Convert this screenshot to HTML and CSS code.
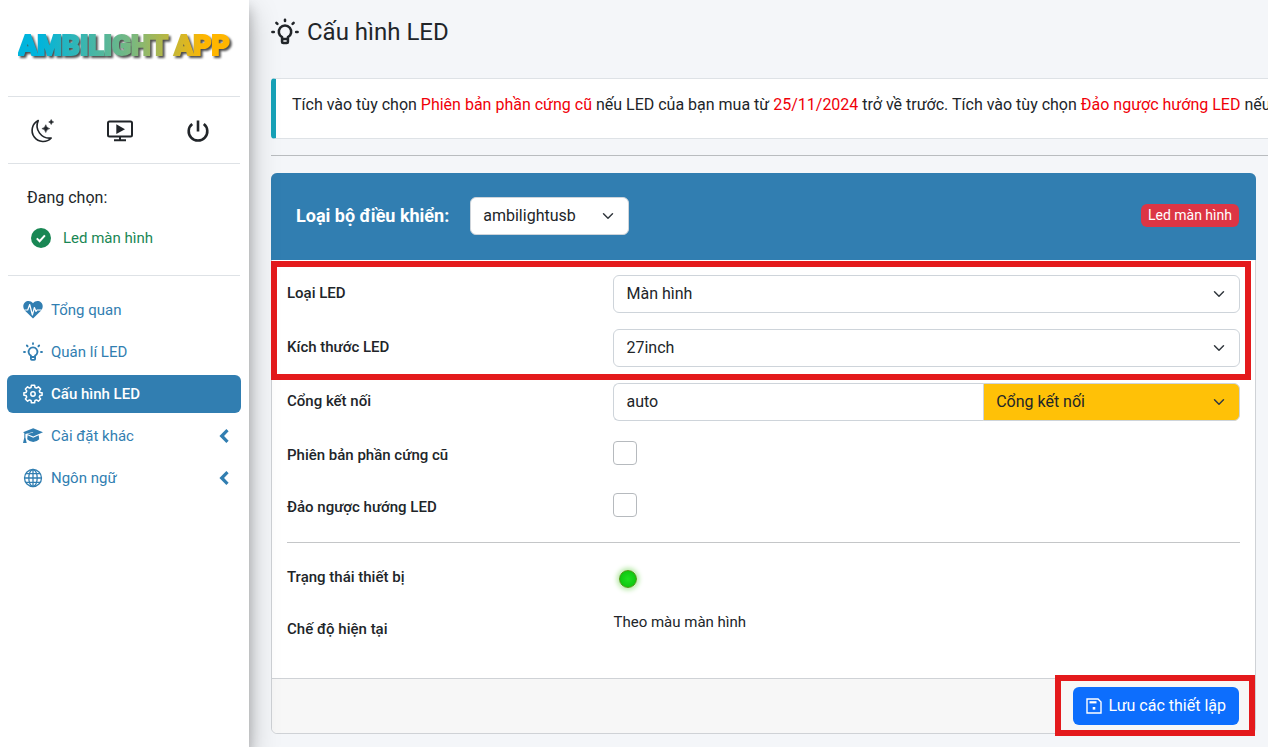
FILE: index.html
```html
<!DOCTYPE html>
<html lang="vi">
  <head>
    <meta charset="UTF-8" />
    <meta name="viewport" content="width=device-width, initial-scale=1.0" />
    <title>Ambilight App</title>
    <link rel="stylesheet" href="styles.css">
  </head>
  <body>
    <!-- shared icon shapes -->
    <svg class="sprite" aria-hidden="true">
      <symbol id="bulb" viewBox="0 0 24 24">
        <g fill="none" stroke="currentColor" stroke-width="2.200" stroke-linecap="round" stroke-linejoin="round">
          <path d="M9.500 18v-1.600a5.300 5.300 0 1 1 5 0V18M9.500 18v2.500a1 1 0 0 0 1 1h3a1 1 0 0 0 1-1V18zM12 1.500v1M4.600 4.200l.9.9M19.400 4.200l-.9.9M1.200 12h1.200M21.600 12h1.200" />
        </g>
      </symbol>
      <symbol id="chevron-left" viewBox="0 0 10 14">
        <path d="M8.500 1.200 2.700 7l5.800 5.800" fill="none" stroke="currentColor" stroke-width="3.200" />
      </symbol>
    </svg>
    <div class="app">
      <aside class="sidebar">
        <a class="brand" href="#"><span class="brand-text">AMBILIGHT APP</span></a>
        <div class="quick">
          <button class="quick-btn" aria-label="Chế độ tối">
            <svg width="26" height="26" viewBox="0 0 24 24" fill="none" stroke="currentColor" stroke-width="1.500" stroke-linejoin="round">
              <path d="M8.500 2.400A10.200 10.200 0 1 0 20.500 18.500 11.500 11.500 0 0 1 8.500 2.400z" />
              <path d="M15.500 6.200q.6 3 3.600 3.600-3 .6-3.600 3.600-.6-3-3.600-3.600 3-.6 3.600-3.600zM20.500 1.400q.4 1.900 2.300 2.300-1.900.4-2.300 2.300-.4-1.900-2.300-2.300 1.900-.4 2.300-2.300z" fill="currentColor" stroke-width=".5" />
            </svg>
          </button>
          <button class="quick-btn" aria-label="Phát màn hình">
            <svg width="26" height="22" viewBox="0 0 26 22" fill="none" stroke="currentColor" stroke-width="2">
              <rect x="1" y="1.500" width="24" height="15" rx="1.500" />
              <path d="M13 16.500v3.500M7 20.200h12" />
              <path d="m9.300 4.300 8.700 4.900-8.700 4.900z" fill="currentColor" stroke="none" />
            </svg>
          </button>
          <button class="quick-btn" aria-label="Tắt nguồn">
            <svg width="24" height="24" viewBox="0 0 24 24" fill="none" stroke="currentColor" stroke-width="2.600">
              <path d="M12 1.500v11M6.200 5a9.300 9.300 0 1 0 11.600 0" />
            </svg>
          </button>
        </div>
        <div class="selected">
          <div class="selected-title">Đang chọn:</div>
          <div class="selected-item">
            <svg width="20" height="20" viewBox="0 0 20 20">
              <circle cx="10" cy="10" r="10" fill="currentColor" />
              <path d="m5.800 10.400 2.800 2.800 5.300-5.800" fill="none" stroke="#fff" stroke-width="2" />
            </svg>
            Led màn hình
          </div>
        </div>
        <nav class="menu">
          <a class="menu-item" href="#">
            <svg class="menu-icon" viewBox="0 0 20 20">
              <path d="M10 18.600 2.300 11C-.2 8.400-.4 4.700 1.900 2.500 4.200.4 7.900.6 10 3.300c2.100-2.700 5.800-2.900 8.100-.8 2.300 2.200 2.100 5.900-.4 8.500z" fill="currentColor" />
              <path d="M1.500 10h3.200l2-5.500 2.700 10.500 2-7.500 1.600 4 1-1.500h4.500" fill="none" stroke="#fff" stroke-width="1.200" stroke-linejoin="round" />
            </svg>
            <span>Tổng quan</span>
          </a>
          <a class="menu-item" href="#">
            <svg class="menu-icon"><use href="#bulb" /></svg>
            <span>Quản lí LED</span>
          </a>
          <a class="menu-item active" href="#">
            <svg class="menu-icon" viewBox="0 0 20 20" fill="none" stroke="currentColor" stroke-width="1.500" stroke-linejoin="round">
              <path d="M8.400 1.200h3.200l.4 2.300 1.500.6 1.900-1.300 2.200 2.200-1.300 1.900.6 1.500 2.200.4v2.400l-2.200.4-.6 1.500 1.300 1.900-2.200 2.200-1.900-1.300-1.500.6-.4 2.300H8.400L8 16.500l-1.500-.6-1.900 1.300L2.400 15l1.300-1.900-.6-1.500-2.200-.4V8.800l2.200-.4.6-1.500L2.400 5l2.200-2.200 1.900 1.300L8 3.500z" />
              <circle cx="10" cy="10" r="2.200" />
            </svg>
            <span>Cấu hình LED</span>
          </a>
          <a class="menu-item" href="#">
            <svg class="menu-icon" viewBox="0 0 20 20" fill="currentColor">
              <path d="M0 6.300 10.200 2.200 20 6.300l-9.800 4.200-6-2.400 6-1.500-.2-.6-7.600 1.900v3.600l1.300 5.500H0l1.300-5.500V7z" />
              <path d="m4.600 9.300 5.600 2.400 5.500-2.400.5 4q-2.700 2.800-6 2.800t-6-2.800z" />
            </svg>
            <span>Cài đặt khác</span>
            <svg class="menu-arrow"><use href="#chevron-left" /></svg>
          </a>
          <a class="menu-item" href="#">
            <svg class="menu-icon" viewBox="0 0 20 20" fill="none" stroke="currentColor" stroke-width="1.300">
              <circle cx="10" cy="10" r="8.500" />
              <ellipse cx="10" cy="10" rx="4.200" ry="8.500" />
              <path d="M10 1.500v17M1.500 10h17M3 5.700h14M3 14.300h14" />
            </svg>
            <span>Ngôn ngữ</span>
            <svg class="menu-arrow"><use href="#chevron-left" /></svg>
          </a>
        </nav>
      </aside>

      <main class="main">
        <h1 class="page-title">
          <svg width="28" height="28"><use href="#bulb" /></svg>
          Cấu hình LED
        </h1>
        <div class="notice">
          Tích vào tùy chọn <span class="hot">Phiên bản phần cứng cũ</span> nếu LED của bạn mua từ <span class="hot">25/11/2024</span> trở về trước. Tích vào tùy chọn <span class="hot">Đảo ngược hướng LED</span> nếu
        </div>
        <hr class="rule">

        <form class="card">
          <div class="card-header">
            <label class="card-title" for="controller">Loại bộ điều khiển:</label>
            <select class="select controller" id="controller"><option>ambilightusb</option></select>
            <span class="badge">Led màn hình</span>
          </div>
          <div class="card-body">
            <div class="group marked">
              <div class="row">
                <label for="led-type">Loại LED</label>
                <select class="select" id="led-type"><option>Màn hình</option></select>
              </div>
              <div class="row">
                <label for="led-size">Kích thước LED</label>
                <select class="select" id="led-size"><option>27inch</option></select>
              </div>
            </div>
            <div class="row">
              <label for="port">Cổng kết nối</label>
              <div class="input-group">
                <input class="input" id="port" type="text" value="auto">
                <select class="select port-select" aria-label="Cổng kết nối"><option>Cổng kết nối</option></select>
              </div>
            </div>
            <div class="row short">
              <label for="old-hw">Phiên bản phần cứng cũ</label>
              <input class="check" id="old-hw" type="checkbox">
            </div>
            <div class="row short">
              <label for="reverse">Đảo ngược hướng LED</label>
              <input class="check" id="reverse" type="checkbox">
            </div>
            <hr class="divider">
            <div class="row short">
              <span class="label">Trạng thái thiết bị</span>
              <span class="status"></span>
            </div>
            <div class="row short">
              <span class="label">Chế độ hiện tại</span>
              <span class="value">Theo màu màn hình</span>
            </div>
          </div>
          <div class="card-footer">
            <div class="save marked">
              <button class="save-btn" type="button">
                <svg width="16" height="16" viewBox="0 0 16 16" fill="none" stroke="currentColor" stroke-width="1.400">
                  <path d="M1 1h11l3 3v11H1z" />
                  <path d="M3.500 4.300h7" stroke-width="2.200" />
                  <path d="M6.700 9h2.600v2.600H6.700z" fill="currentColor" stroke="none" />
                </svg>
                Lưu các thiết lập
              </button>
            </div>
          </div>
        </form>
      </main>
    </div>
  </body>
</html>
```
FILE: styles.css
```css
* {
  box-sizing: border-box;
}
body {
  margin: 0;
  font-family: Roboto, "Liberation Sans", sans-serif;
  font-size: 16px;
  line-height: 24px;
  color: #212529;
  background: #f4f6f9;
}
a {
  text-decoration: none;
}
button, input, select {
  font: inherit;
  color: inherit;
  margin: 0;
}
.sprite {
  display: none;
}
.app {
  display: flex;
  min-height: 100vh;
  overflow: hidden;
}

/* sidebar */
.sidebar {
  flex: 0 0 249px;
  min-width: 0;
  padding: 0 9px 0 8px;
  background: #fff;
  box-shadow: 0 12px 28px rgba(0, 0, 0, .25), 0 8px 12px rgba(0, 0, 0, .22);
  z-index: 1;
}
.brand {
  display: flex;
  align-items: center;
  justify-content: center;
  height: 97px;
  padding-bottom: 4px;
  border-bottom: 1px solid #dee2e6;
}
.brand-text {
  font-size: 28px;
  line-height: 40px;
  font-weight: 900;
  white-space: nowrap;
  color: transparent;
  background: linear-gradient(90deg, #00b4dc 10%, #7db87c 55%, #ffb600 88%);
  background-clip: text;
  -webkit-background-clip: text;
  -webkit-text-stroke: 2px transparent;
  filter: drop-shadow(2px 2px 1px rgba(0, 0, 0, .7));
}
.quick {
  display: flex;
  height: 67px;
  padding-top: 2px;
  border-bottom: 1px solid #dee2e6;
}
.quick-btn {
  display: flex;
  align-items: center;
  justify-content: center;
  flex: 0 0 78px;
  padding: 0 10px 0 0;
  border: none;
  background: none;
  cursor: pointer;
}
.selected {
  height: 112px;
  padding: 22px 19px;
  border-bottom: 1px solid #dee2e6;
}
.selected-item {
  display: flex;
  align-items: center;
  gap: 12px;
  margin-top: 16px;
  padding-left: 4px;
  font-size: 15px;
  color: #198754;
}
.menu {
  display: flex;
  flex-direction: column;
  gap: 4px;
  margin: 15px -1px 0;
}
.menu-item {
  display: flex;
  align-items: center;
  gap: 8px;
  height: 38px;
  padding: 0 12px 0 16px;
  border-radius: 6px;
  font-size: 15px;
  color: #317eb1;
}
.menu-item.active {
  background: #317eb1;
  color: #fff;
  font-weight: 500;
}
.menu-icon {
  width: 20px;
  height: 20px;
}
.menu-arrow {
  width: 10px;
  height: 14px;
  margin-left: auto;
}

/* content */
.main {
  flex: 1;
  min-width: 0;
  padding: 16px 12px 13px 22px;
}
.page-title {
  display: flex;
  align-items: center;
  gap: 8px;
  margin: 0 0 30px;
  font-size: 24px;
  line-height: 32px;
  font-weight: 400;
}
.notice {
  margin-right: -20px;
  padding: 14px 16px 21px;
  border: 1px solid #dee2e6;
  border-left: 5px solid #17a2b8;
  border-radius: 4px;
  background: #fff;
  white-space: nowrap;
}
.hot {
  color: #f00008;
}
.rule {
  margin: 16px -12px 17px 0;
  border: none;
  border-top: 1px solid #b9bcbf;
}
.card {
  border: 1px solid #cfd2d6;
  border-radius: 6px;
  background: #fff;
}
.card-header {
  display: flex;
  align-items: center;
  height: 87px;
  margin: -1px -1px 0;
  padding: 0 17px 2px 25px;
  border-radius: 6px 6px 0 0;
  background: #317eb1;
}
.card-title {
  font-size: 18px;
  font-weight: 700;
  color: #fff;
}
.controller {
  width: 159px;
  margin-left: 21px;
}
.badge {
  margin-left: auto;
  padding: 0 7px;
  border-radius: 6px;
  font-size: 14px;
  line-height: 23px;
  color: #fff;
  background: #dc3545;
}
.card-body {
  display: flex;
  flex-direction: column;
  gap: 16px;
  padding: 15px 15px 31px;
}
.group {
  display: grid;
  gap: 16px;
}
.row {
  display: grid;
  grid-template-columns: calc(33% + 12px) 1fr;
  height: 38px;
}
.row.short {
  height: 36px;
}
.row label, .label {
  font-size: 15px;
  line-height: 36px;
  font-weight: 500;
}
.select, .input {
  height: 38px;
  min-width: 0;
  padding: 0 12px;
  border: 1px solid #ced4da;
  border-radius: 6px;
  background-color: #fff;
}
.select {
  appearance: none;
  background-image: url("data:image/svg+xml,%3Csvg xmlns='http://www.w3.org/2000/svg' viewBox='0 0 16 16'%3E%3Cpath fill='none' stroke='%23343a40' stroke-linecap='round' stroke-linejoin='round' stroke-width='2' d='m2 5 6 6 6-6'/%3E%3C/svg%3E");
  background-repeat: no-repeat;
  background-position: right 14px center;
  background-size: 12px;
}
.input-group {
  display: flex;
}
.input-group .input {
  width: 59%;
  padding-bottom: 2px;
  border-right: none;
  border-radius: 6px 0 0 6px;
}
.port-select {
  flex: 1;
  border-radius: 0 6px 6px 0;
  background-color: #ffc107;
}
.check {
  appearance: none;
  width: 24px;
  height: 24px;
  margin-top: 4px;
  border: 1px solid #b6babe;
  border-radius: 4px;
  background: #fff;
}
.check:checked {
  background: #0d6efd;
}
.divider {
  width: 100%;
  margin: 1px 0 0;
  border: none;
  border-top: 1px solid #c4c6c8;
}
.status {
  width: 18px;
  height: 18px;
  margin: 11px 6px;
  border: 1px solid #4d9a12;
  border-radius: 50%;
  background: radial-gradient(#1fe01f, #0bbd0b);
  box-shadow: 0 0 5px 2px #b6e8a6;
}
.value {
  font-size: 15px;
  line-height: 22px;
}
.card-footer {
  display: flex;
  justify-content: flex-end;
  padding: 8px 16px;
  border-top: 1px solid #cfd2d6;
  border-radius: 0 0 6px 6px;
  background: #f7f7f7;
}
.save-btn {
  display: flex;
  align-items: center;
  gap: 6px;
  height: 38px;
  padding: 0 13px;
  border: none;
  border-radius: 6px;
  color: #fff;
  background: #0d6efd;
  cursor: pointer;
}

/* red highlight frames */
.marked {
  position: relative;
}
.marked::after {
  content: "";
  position: absolute;
  inset: -14px -11px -13px -16px;
  border: 6px solid #e41a1c;
  pointer-events: none;
}
.save.marked::after {
  inset: -12px -16px -11px -18px;
}
```
